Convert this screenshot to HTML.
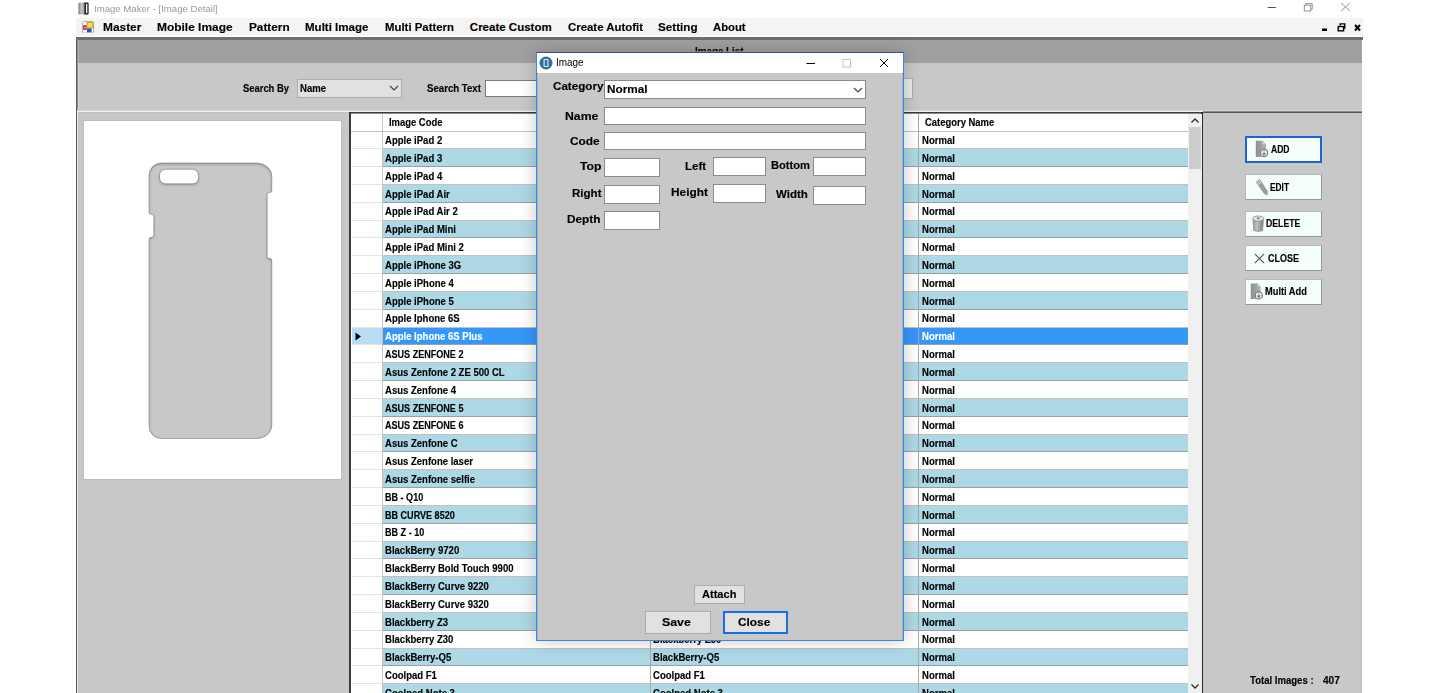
<!DOCTYPE html>
<html><head><meta charset="utf-8"><style>
*{margin:0;padding:0;box-sizing:border-box}
html,body{width:1441px;height:693px;overflow:hidden;background:#fff;position:relative;font-family:"Liberation Sans",sans-serif}
.a{position:absolute}
.tx{position:absolute;white-space:nowrap;line-height:1;transform-origin:0 0;-webkit-text-stroke:0.15px currentColor}
.row{position:absolute;left:383px;width:805px;height:17.81px}
.rl{position:absolute;left:383px;width:805px;height:1px;background:#b4b4b4}
.rh{position:absolute;left:352px;width:30px;height:1px;background:#e4e4e4}
.btn{position:absolute;left:1245px;width:77px;height:26px;background:#f5fffa;border:1px solid #b8b8b8;border-right-color:#989898;border-bottom-color:#989898}
.tb{position:absolute;background:#fff;border:1px solid #8c8c8c}
.dbtn{position:absolute;background:#e1e1e1;border:1px solid #adadad}
</style></head><body>

<svg class="a" style="left:77.5px;top:1.5px" width="11" height="13" viewBox="0 0 11 13">
<defs><linearGradient id="ig" x1="0" x2="1"><stop offset="0" stop-color="#7c7c7c"/><stop offset="0.5" stop-color="#c4c4c4"/><stop offset="1" stop-color="#9a9a9a"/></linearGradient></defs>
<rect x="0.4" y="0.6" width="6.2" height="11.8" rx="1.2" fill="url(#ig)"/>
<rect x="6.1" y="0.2" width="0.8" height="12.6" fill="#444"/>
<rect x="6.9" y="0.6" width="3.7" height="11.8" rx="0.9" fill="#111"/>
<rect x="7.9" y="1.8" width="1.5" height="9.4" fill="#e8f4f4"/>
</svg>
<div class="tx" style="left:93.74px;top:4.73px;font-size:8.87px;transform:scaleX(1.083);color:#9b97a0;-webkit-text-stroke:0">Image Maker - [Image Detail]</div>
<svg class="a" style="left:1260px;top:0px" width="100" height="16" viewBox="0 0 100 16">
<line x1="7.7" y1="7.5" x2="16" y2="7.5" stroke="#555" stroke-width="1"/>
<rect x="44.3" y="5.2" width="6.4" height="5.8" fill="none" stroke="#888" stroke-width="0.9"/>
<path d="M45.8 5.2 V3.6 H52.2 V9.2 H50.7" fill="none" stroke="#888" stroke-width="0.9"/>
<path d="M81 3 L90 11 M90 3 L81 11" stroke="#8a8a8a" stroke-width="0.9"/>
</svg>
<div class="a" style="left:76px;top:17.5px;width:1287px;height:18.5px;background:#f4f4f4"></div>
<svg class="a" style="left:82px;top:20.8px" width="12" height="12.5" viewBox="0 0 12 12.5">
<rect x="0.5" y="0.5" width="11" height="11.5" rx="1.2" fill="#fff" stroke="#a8a8a8" stroke-width="0.9"/>
<rect x="1.2" y="4.2" width="3.4" height="4.6" fill="#b81212"/>
<rect x="2.3" y="5.6" width="1.4" height="1.8" fill="#f4d0d0"/>
<rect x="5" y="1.3" width="6" height="5.6" fill="#f2dc58" stroke="#c49a00" stroke-width="0.8"/>
<rect x="5" y="7.4" width="4.6" height="3.9" fill="#1a56cc"/>
</svg>
<div class="tx" style="left:102.77px;top:21.57px;font-size:11.50px;font-weight:bold;transform:scaleX(1.034);color:#000">Master</div>
<div class="tx" style="left:157.36px;top:21.57px;font-size:11.50px;font-weight:bold;transform:scaleX(1.038);color:#000">Mobile Image</div>
<div class="tx" style="left:249.08px;top:21.57px;font-size:11.50px;font-weight:bold;transform:scaleX(1.025);color:#000">Pattern</div>
<div class="tx" style="left:304.89px;top:21.57px;font-size:11.50px;font-weight:bold;transform:scaleX(1.003);color:#000">Multi Image</div>
<div class="tx" style="left:384.70px;top:21.57px;font-size:11.50px;font-weight:bold;transform:scaleX(0.991);color:#000">Multi Pattern</div>
<div class="tx" style="left:469.84px;top:21.57px;font-size:11.50px;font-weight:bold;transform:scaleX(1.000);color:#000">Create Custom</div>
<div class="tx" style="left:567.74px;top:21.57px;font-size:11.50px;font-weight:bold;transform:scaleX(0.992);color:#000">Create Autofit</div>
<div class="tx" style="left:658.25px;top:21.57px;font-size:11.50px;font-weight:bold;transform:scaleX(1.015);color:#000">Setting</div>
<div class="tx" style="left:713.16px;top:21.57px;font-size:11.50px;font-weight:bold;transform:scaleX(0.982);color:#000">About</div>
<svg class="a" style="left:1318px;top:20px" width="46" height="14" viewBox="0 0 46 14">
<rect x="4" y="8.5" width="5" height="2.5" fill="#000"/>
<rect x="20.2" y="6.6" width="5.4" height="4.2" fill="none" stroke="#000" stroke-width="1.4"/>
<path d="M22.2 5.8 V3.9 H26.8 V8 H26" fill="none" stroke="#000" stroke-width="1.4"/>
<path d="M37 5 L42 10.5 M42 5 L37 10.5" stroke="#000" stroke-width="2"/>
</svg>
<div class="a" style="left:76px;top:37px;width:1286px;height:656px;background:#c8c8c8"></div>
<div class="a" style="left:76px;top:37px;width:1286.5px;height:2.5px;background:#6e6e6e"></div>
<div class="a" style="left:76px;top:37px;width:1px;height:656px;background:#5c5c5c"></div>
<div class="a" style="left:77px;top:39px;width:1px;height:71px;background:#8c8c8c"></div>
<div class="a" style="left:78px;top:39.5px;width:1px;height:23px;background:#b0b0b0"></div>
<div class="a" style="left:78px;top:62.5px;width:1px;height:47.5px;background:#d6d6d6"></div>
<div class="a" style="left:77px;top:112px;width:1px;height:581px;background:#e8e8e8"></div>
<div class="a" style="left:79px;top:39.5px;width:1283px;height:23px;background:#a0a0a0"></div>
<div class="a" style="left:77px;top:110px;width:1285px;height:1px;background:#d6d6d6"></div>
<div class="a" style="left:77px;top:111px;width:1285px;height:1px;background:#f2f2f2"></div>
<div class="a" style="left:78px;top:112px;width:1284px;height:1px;background:#c0c0c0"></div>
<div class="a" style="left:1203px;top:111px;width:159px;height:1px;background:#8c8c8c"></div>
<div class="a" style="left:1203px;top:112px;width:159px;height:1px;background:#555"></div>
<div class="a" style="left:1361px;top:113px;width:1px;height:580px;background:#bdbdbd"></div>
<div class="tx" style="left:695.21px;top:47.40px;font-size:10.30px;font-weight:bold;transform:scaleX(0.953);color:#000">Image List</div>
<div class="tx" style="left:242.52px;top:84.05px;font-size:10.30px;font-weight:bold;transform:scaleX(0.913);color:#000">Search By</div>
<div class="a" style="left:297px;top:79px;width:105px;height:19px;background:#e1e1e1;border:1px solid #adadad"></div>
<div class="tx" style="left:300.23px;top:84.05px;font-size:10.30px;font-weight:bold;transform:scaleX(0.930);color:#000">Name</div>
<svg class="a" style="left:389px;top:85px" width="10" height="6" viewBox="0 0 10 6"><path d="M1 1 L5 5 L9 1" fill="none" stroke="#444" stroke-width="1.2"/></svg>
<div class="tx" style="left:426.71px;top:83.85px;font-size:10.30px;font-weight:bold;transform:scaleX(0.936);color:#000">Search Text</div>
<div class="a" style="left:485px;top:80px;width:60px;height:17px;background:#fff;border:1px solid #7a7a7a"></div>
<div class="a" style="left:895px;top:77.5px;width:18px;height:21px;background:#e6eee9;border:1px solid #adadad"></div>
<div class="a" style="left:83px;top:120px;width:259px;height:360px;background:#bdbdbd"></div>
<div class="a" style="left:84px;top:121px;width:257px;height:358px;background:#fff"></div>
<svg class="a" style="left:140px;top:155px" width="145" height="295" viewBox="0 0 145 295">
<defs><filter id="inset" x="-5%" y="-5%" width="110%" height="110%">
<feComponentTransfer in="SourceAlpha" result="inv"><feFuncA type="table" tableValues="1 0"/></feComponentTransfer>
<feGaussianBlur in="inv" stdDeviation="1.4"/>
<feOffset dx="0.4" dy="1.2" result="ob"/>
<feFlood flood-color="#000" flood-opacity="0.62"/>
<feComposite in2="ob" operator="in"/>
<feComposite in2="SourceAlpha" operator="in" result="is"/>
<feMerge><feMergeNode in="SourceGraphic"/><feMergeNode in="is"/></feMerge>
</filter></defs>
<path filter="url(#inset)" fill-rule="evenodd" fill="#c8c8c8" stroke="#8a8a8a" stroke-width="0.6" d="M9.2 20.2 A12 12 0 0 1 21.2 8.2 H116.7 A15 13 0 0 1 131.7 21.2 V35.5 Q131.7 37.5 129.7 37.5 H129.1 Q127.1 37.5 127.1 39.5 V101.6 Q127.1 103.6 129.1 103.6 H129.7 Q131.7 103.6 131.7 105.6 V270.5 A15 13 0 0 1 116.7 283.5 H21.2 A12 12 0 0 1 9.2 271.5 V84.4 Q9.2 82.4 11.2 82.4 H11.7 Q13.9 82.4 13.9 80.2 V61.4 Q13.9 59.2 11.7 59.2 H11.2 Q9.2 59.2 9.2 57.2 Z M25.5 14.2 H52.6 A6 6 0 0 1 58.6 20.2 V22.9 A6 6 0 0 1 52.6 28.9 H25.5 A6 6 0 0 1 19.5 22.9 V20.2 A6 6 0 0 1 25.5 14.2 Z"/>
</svg>
<div class="a" style="left:349px;top:112px;width:854px;height:581px;background:#fff;border-left:2px solid #3c3c3c;border-top:1px solid #3a3a3a;border-right:2px solid #2a2a2a"></div>
<div class="a" style="left:351px;top:113px;width:850px;height:1px;background:#8e8e8e"></div>
<div class="a" style="left:351px;top:131px;width:837px;height:1px;background:#c0c0c0"></div>
<div class="tx" style="left:388.84px;top:118.25px;font-size:10.30px;font-weight:bold;transform:scaleX(0.915);color:#000">Image Code</div>
<div class="tx" style="left:925.32px;top:118.00px;font-size:10.30px;font-weight:bold;transform:scaleX(0.917);color:#000">Category Name</div>
<div class="a" style="left:383px;width:805px;top:132px;height:16px;background:#ffffff"></div>
<div class="rl" style="top:148px;background:#c8bebe"></div>
<div class="rh" style="top:148px"></div>
<div class="tx" style="left:385.01px;top:136.15px;font-size:10.00px;font-weight:bold;transform:scaleX(0.953);color:#000">Apple iPad 2</div>
<div class="tx" style="left:653.21px;top:136.15px;font-size:10.00px;font-weight:bold;transform:scaleX(0.953);color:#000">Apple iPad 2</div>
<div class="tx" style="left:921.93px;top:136.15px;font-size:10.00px;font-weight:bold;transform:scaleX(0.953);color:#000">Normal</div>
<div class="a" style="left:383px;width:805px;top:149px;height:17px;background:#add8e6"></div>
<div class="rl" style="top:166px;background:#9aa0a2"></div>
<div class="rh" style="top:166px"></div>
<div class="tx" style="left:385.01px;top:153.98px;font-size:10.00px;font-weight:bold;transform:scaleX(0.953);color:#000">Apple iPad 3</div>
<div class="tx" style="left:653.21px;top:153.98px;font-size:10.00px;font-weight:bold;transform:scaleX(0.953);color:#000">Apple iPad 3</div>
<div class="tx" style="left:921.93px;top:153.98px;font-size:10.00px;font-weight:bold;transform:scaleX(0.953);color:#000">Normal</div>
<div class="a" style="left:383px;width:805px;top:167px;height:17px;background:#ffffff"></div>
<div class="rl" style="top:184px;background:#c8bebe"></div>
<div class="rh" style="top:184px"></div>
<div class="tx" style="left:385.01px;top:171.81px;font-size:10.00px;font-weight:bold;transform:scaleX(0.953);color:#000">Apple iPad 4</div>
<div class="tx" style="left:653.21px;top:171.81px;font-size:10.00px;font-weight:bold;transform:scaleX(0.953);color:#000">Apple iPad 4</div>
<div class="tx" style="left:921.93px;top:171.81px;font-size:10.00px;font-weight:bold;transform:scaleX(0.953);color:#000">Normal</div>
<div class="a" style="left:383px;width:805px;top:185px;height:17px;background:#add8e6"></div>
<div class="rl" style="top:202px;background:#9aa0a2"></div>
<div class="rh" style="top:202px"></div>
<div class="tx" style="left:385.01px;top:189.64px;font-size:10.00px;font-weight:bold;transform:scaleX(0.953);color:#000">Apple iPad Air</div>
<div class="tx" style="left:653.21px;top:189.64px;font-size:10.00px;font-weight:bold;transform:scaleX(0.953);color:#000">Apple iPad Air</div>
<div class="tx" style="left:921.93px;top:189.64px;font-size:10.00px;font-weight:bold;transform:scaleX(0.953);color:#000">Normal</div>
<div class="a" style="left:383px;width:805px;top:203px;height:17px;background:#ffffff"></div>
<div class="rl" style="top:220px;background:#c8bebe"></div>
<div class="rh" style="top:220px"></div>
<div class="tx" style="left:385.01px;top:207.47px;font-size:10.00px;font-weight:bold;transform:scaleX(0.953);color:#000">Apple iPad Air 2</div>
<div class="tx" style="left:653.21px;top:207.47px;font-size:10.00px;font-weight:bold;transform:scaleX(0.953);color:#000">Apple iPad Air 2</div>
<div class="tx" style="left:921.93px;top:207.47px;font-size:10.00px;font-weight:bold;transform:scaleX(0.953);color:#000">Normal</div>
<div class="a" style="left:383px;width:805px;top:221px;height:16px;background:#add8e6"></div>
<div class="rl" style="top:237px;background:#9aa0a2"></div>
<div class="rh" style="top:237px"></div>
<div class="tx" style="left:385.01px;top:225.30px;font-size:10.00px;font-weight:bold;transform:scaleX(0.953);color:#000">Apple iPad Mini</div>
<div class="tx" style="left:653.21px;top:225.30px;font-size:10.00px;font-weight:bold;transform:scaleX(0.953);color:#000">Apple iPad Mini</div>
<div class="tx" style="left:921.93px;top:225.30px;font-size:10.00px;font-weight:bold;transform:scaleX(0.953);color:#000">Normal</div>
<div class="a" style="left:383px;width:805px;top:238px;height:17px;background:#ffffff"></div>
<div class="rl" style="top:255px;background:#c8bebe"></div>
<div class="rh" style="top:255px"></div>
<div class="tx" style="left:385.01px;top:243.13px;font-size:10.00px;font-weight:bold;transform:scaleX(0.953);color:#000">Apple iPad Mini 2</div>
<div class="tx" style="left:653.21px;top:243.13px;font-size:10.00px;font-weight:bold;transform:scaleX(0.953);color:#000">Apple iPad Mini 2</div>
<div class="tx" style="left:921.93px;top:243.13px;font-size:10.00px;font-weight:bold;transform:scaleX(0.953);color:#000">Normal</div>
<div class="a" style="left:383px;width:805px;top:256px;height:17px;background:#add8e6"></div>
<div class="rl" style="top:273px;background:#9aa0a2"></div>
<div class="rh" style="top:273px"></div>
<div class="tx" style="left:385.01px;top:260.96px;font-size:10.00px;font-weight:bold;transform:scaleX(0.953);color:#000">Apple iPhone 3G</div>
<div class="tx" style="left:653.21px;top:260.96px;font-size:10.00px;font-weight:bold;transform:scaleX(0.953);color:#000">Apple iPhone 3G</div>
<div class="tx" style="left:921.93px;top:260.96px;font-size:10.00px;font-weight:bold;transform:scaleX(0.953);color:#000">Normal</div>
<div class="a" style="left:383px;width:805px;top:274px;height:17px;background:#ffffff"></div>
<div class="rl" style="top:291px;background:#c8bebe"></div>
<div class="rh" style="top:291px"></div>
<div class="tx" style="left:385.01px;top:278.79px;font-size:10.00px;font-weight:bold;transform:scaleX(0.953);color:#000">Apple iPhone 4</div>
<div class="tx" style="left:653.21px;top:278.79px;font-size:10.00px;font-weight:bold;transform:scaleX(0.953);color:#000">Apple iPhone 4</div>
<div class="tx" style="left:921.93px;top:278.79px;font-size:10.00px;font-weight:bold;transform:scaleX(0.953);color:#000">Normal</div>
<div class="a" style="left:383px;width:805px;top:292px;height:17px;background:#add8e6"></div>
<div class="rl" style="top:309px;background:#9aa0a2"></div>
<div class="rh" style="top:309px"></div>
<div class="tx" style="left:385.01px;top:296.62px;font-size:10.00px;font-weight:bold;transform:scaleX(0.953);color:#000">Apple iPhone 5</div>
<div class="tx" style="left:653.21px;top:296.62px;font-size:10.00px;font-weight:bold;transform:scaleX(0.953);color:#000">Apple iPhone 5</div>
<div class="tx" style="left:921.93px;top:296.62px;font-size:10.00px;font-weight:bold;transform:scaleX(0.953);color:#000">Normal</div>
<div class="a" style="left:383px;width:805px;top:310px;height:17px;background:#ffffff"></div>
<div class="rl" style="top:327px;background:#c8bebe"></div>
<div class="rh" style="top:327px"></div>
<div class="tx" style="left:385.01px;top:314.45px;font-size:10.00px;font-weight:bold;transform:scaleX(0.953);color:#000">Apple Iphone 6S</div>
<div class="tx" style="left:653.21px;top:314.45px;font-size:10.00px;font-weight:bold;transform:scaleX(0.953);color:#000">Apple Iphone 6S</div>
<div class="tx" style="left:921.93px;top:314.45px;font-size:10.00px;font-weight:bold;transform:scaleX(0.953);color:#000">Normal</div>
<div class="a" style="left:383px;width:805px;top:328px;height:16px;background:#3597f8"></div>
<div class="rl" style="top:344px;background:#9aa0a2"></div>
<div class="rh" style="top:344px"></div>
<div class="tx" style="left:385.01px;top:332.28px;font-size:10.00px;font-weight:bold;transform:scaleX(0.953);color:#fff">Apple Iphone 6S Plus</div>
<div class="tx" style="left:653.21px;top:332.28px;font-size:10.00px;font-weight:bold;transform:scaleX(0.953);color:#fff">Apple Iphone 6S Plus</div>
<div class="tx" style="left:921.93px;top:332.28px;font-size:10.00px;font-weight:bold;transform:scaleX(0.953);color:#fff">Normal</div>
<div class="a" style="left:352px;top:328px;width:30px;height:16px;background:#bcdcf6"></div>
<svg class="a" style="left:355px;top:332.00px" width="7" height="9" viewBox="0 0 7 9"><path d="M0.5 0.5 L6 4.5 L0.5 8.5 Z" fill="#000"/></svg>
<div class="a" style="left:383px;width:805px;top:345px;height:17px;background:#ffffff"></div>
<div class="rl" style="top:362px;background:#c8bebe"></div>
<div class="rh" style="top:362px"></div>
<div class="tx" style="left:385.03px;top:350.11px;font-size:10.00px;font-weight:bold;transform:scaleX(0.905);color:#000">ASUS ZENFONE 2</div>
<div class="tx" style="left:653.23px;top:350.11px;font-size:10.00px;font-weight:bold;transform:scaleX(0.905);color:#000">ASUS ZENFONE 2</div>
<div class="tx" style="left:921.93px;top:350.11px;font-size:10.00px;font-weight:bold;transform:scaleX(0.953);color:#000">Normal</div>
<div class="a" style="left:383px;width:805px;top:363px;height:17px;background:#add8e6"></div>
<div class="rl" style="top:380px;background:#9aa0a2"></div>
<div class="rh" style="top:380px"></div>
<div class="tx" style="left:385.01px;top:367.94px;font-size:10.00px;font-weight:bold;transform:scaleX(0.953);color:#000">Asus Zenfone 2 ZE 500 CL</div>
<div class="tx" style="left:653.21px;top:367.94px;font-size:10.00px;font-weight:bold;transform:scaleX(0.953);color:#000">Asus Zenfone 2 ZE 500 CL</div>
<div class="tx" style="left:921.93px;top:367.94px;font-size:10.00px;font-weight:bold;transform:scaleX(0.953);color:#000">Normal</div>
<div class="a" style="left:383px;width:805px;top:381px;height:17px;background:#ffffff"></div>
<div class="rl" style="top:398px;background:#c8bebe"></div>
<div class="rh" style="top:398px"></div>
<div class="tx" style="left:385.01px;top:385.77px;font-size:10.00px;font-weight:bold;transform:scaleX(0.953);color:#000">Asus Zenfone 4</div>
<div class="tx" style="left:653.21px;top:385.77px;font-size:10.00px;font-weight:bold;transform:scaleX(0.953);color:#000">Asus Zenfone 4</div>
<div class="tx" style="left:921.93px;top:385.77px;font-size:10.00px;font-weight:bold;transform:scaleX(0.953);color:#000">Normal</div>
<div class="a" style="left:383px;width:805px;top:399px;height:17px;background:#add8e6"></div>
<div class="rl" style="top:416px;background:#9aa0a2"></div>
<div class="rh" style="top:416px"></div>
<div class="tx" style="left:385.03px;top:403.60px;font-size:10.00px;font-weight:bold;transform:scaleX(0.905);color:#000">ASUS ZENFONE 5</div>
<div class="tx" style="left:653.23px;top:403.60px;font-size:10.00px;font-weight:bold;transform:scaleX(0.905);color:#000">ASUS ZENFONE 5</div>
<div class="tx" style="left:921.93px;top:403.60px;font-size:10.00px;font-weight:bold;transform:scaleX(0.953);color:#000">Normal</div>
<div class="a" style="left:383px;width:805px;top:417px;height:17px;background:#ffffff"></div>
<div class="rl" style="top:434px;background:#c8bebe"></div>
<div class="rh" style="top:434px"></div>
<div class="tx" style="left:385.03px;top:421.43px;font-size:10.00px;font-weight:bold;transform:scaleX(0.905);color:#000">ASUS ZENFONE 6</div>
<div class="tx" style="left:653.23px;top:421.43px;font-size:10.00px;font-weight:bold;transform:scaleX(0.905);color:#000">ASUS ZENFONE 6</div>
<div class="tx" style="left:921.93px;top:421.43px;font-size:10.00px;font-weight:bold;transform:scaleX(0.953);color:#000">Normal</div>
<div class="a" style="left:383px;width:805px;top:435px;height:16px;background:#add8e6"></div>
<div class="rl" style="top:451px;background:#9aa0a2"></div>
<div class="rh" style="top:451px"></div>
<div class="tx" style="left:385.01px;top:439.26px;font-size:10.00px;font-weight:bold;transform:scaleX(0.953);color:#000">Asus Zenfone C</div>
<div class="tx" style="left:653.21px;top:439.26px;font-size:10.00px;font-weight:bold;transform:scaleX(0.953);color:#000">Asus Zenfone C</div>
<div class="tx" style="left:921.93px;top:439.26px;font-size:10.00px;font-weight:bold;transform:scaleX(0.953);color:#000">Normal</div>
<div class="a" style="left:383px;width:805px;top:452px;height:17px;background:#ffffff"></div>
<div class="rl" style="top:469px;background:#c8bebe"></div>
<div class="rh" style="top:469px"></div>
<div class="tx" style="left:385.01px;top:457.09px;font-size:10.00px;font-weight:bold;transform:scaleX(0.953);color:#000">Asus Zenfone laser</div>
<div class="tx" style="left:653.21px;top:457.09px;font-size:10.00px;font-weight:bold;transform:scaleX(0.953);color:#000">Asus Zenfone laser</div>
<div class="tx" style="left:921.93px;top:457.09px;font-size:10.00px;font-weight:bold;transform:scaleX(0.953);color:#000">Normal</div>
<div class="a" style="left:383px;width:805px;top:470px;height:17px;background:#add8e6"></div>
<div class="rl" style="top:487px;background:#9aa0a2"></div>
<div class="rh" style="top:487px"></div>
<div class="tx" style="left:385.01px;top:474.92px;font-size:10.00px;font-weight:bold;transform:scaleX(0.953);color:#000">Asus Zenfone selfie</div>
<div class="tx" style="left:653.21px;top:474.92px;font-size:10.00px;font-weight:bold;transform:scaleX(0.953);color:#000">Asus Zenfone selfie</div>
<div class="tx" style="left:921.93px;top:474.92px;font-size:10.00px;font-weight:bold;transform:scaleX(0.953);color:#000">Normal</div>
<div class="a" style="left:383px;width:805px;top:488px;height:17px;background:#ffffff"></div>
<div class="rl" style="top:505px;background:#c8bebe"></div>
<div class="rh" style="top:505px"></div>
<div class="tx" style="left:384.67px;top:492.75px;font-size:10.00px;font-weight:bold;transform:scaleX(0.905);color:#000">BB - Q10</div>
<div class="tx" style="left:652.87px;top:492.75px;font-size:10.00px;font-weight:bold;transform:scaleX(0.905);color:#000">BB - Q10</div>
<div class="tx" style="left:921.93px;top:492.75px;font-size:10.00px;font-weight:bold;transform:scaleX(0.953);color:#000">Normal</div>
<div class="a" style="left:383px;width:805px;top:506px;height:17px;background:#add8e6"></div>
<div class="rl" style="top:523px;background:#9aa0a2"></div>
<div class="rh" style="top:523px"></div>
<div class="tx" style="left:384.67px;top:510.58px;font-size:10.00px;font-weight:bold;transform:scaleX(0.905);color:#000">BB CURVE 8520</div>
<div class="tx" style="left:652.87px;top:510.58px;font-size:10.00px;font-weight:bold;transform:scaleX(0.905);color:#000">BB CURVE 8520</div>
<div class="tx" style="left:921.93px;top:510.58px;font-size:10.00px;font-weight:bold;transform:scaleX(0.953);color:#000">Normal</div>
<div class="a" style="left:383px;width:805px;top:524px;height:17px;background:#ffffff"></div>
<div class="rl" style="top:541px;background:#c8bebe"></div>
<div class="rh" style="top:541px"></div>
<div class="tx" style="left:384.67px;top:528.41px;font-size:10.00px;font-weight:bold;transform:scaleX(0.905);color:#000">BB Z - 10</div>
<div class="tx" style="left:652.87px;top:528.41px;font-size:10.00px;font-weight:bold;transform:scaleX(0.905);color:#000">BB Z - 10</div>
<div class="tx" style="left:921.93px;top:528.41px;font-size:10.00px;font-weight:bold;transform:scaleX(0.953);color:#000">Normal</div>
<div class="a" style="left:383px;width:805px;top:542px;height:16px;background:#add8e6"></div>
<div class="rl" style="top:558px;background:#9aa0a2"></div>
<div class="rh" style="top:558px"></div>
<div class="tx" style="left:384.63px;top:546.24px;font-size:10.00px;font-weight:bold;transform:scaleX(0.953);color:#000">BlackBerry 9720</div>
<div class="tx" style="left:652.83px;top:546.24px;font-size:10.00px;font-weight:bold;transform:scaleX(0.953);color:#000">BlackBerry 9720</div>
<div class="tx" style="left:921.93px;top:546.24px;font-size:10.00px;font-weight:bold;transform:scaleX(0.953);color:#000">Normal</div>
<div class="a" style="left:383px;width:805px;top:559px;height:17px;background:#ffffff"></div>
<div class="rl" style="top:576px;background:#c8bebe"></div>
<div class="rh" style="top:576px"></div>
<div class="tx" style="left:384.63px;top:564.07px;font-size:10.00px;font-weight:bold;transform:scaleX(0.953);color:#000">BlackBerry Bold Touch 9900</div>
<div class="tx" style="left:652.83px;top:564.07px;font-size:10.00px;font-weight:bold;transform:scaleX(0.953);color:#000">BlackBerry Bold Touch 9900</div>
<div class="tx" style="left:921.93px;top:564.07px;font-size:10.00px;font-weight:bold;transform:scaleX(0.953);color:#000">Normal</div>
<div class="a" style="left:383px;width:805px;top:577px;height:17px;background:#add8e6"></div>
<div class="rl" style="top:594px;background:#9aa0a2"></div>
<div class="rh" style="top:594px"></div>
<div class="tx" style="left:384.63px;top:581.90px;font-size:10.00px;font-weight:bold;transform:scaleX(0.953);color:#000">BlackBerry Curve 9220</div>
<div class="tx" style="left:652.83px;top:581.90px;font-size:10.00px;font-weight:bold;transform:scaleX(0.953);color:#000">BlackBerry Curve 9220</div>
<div class="tx" style="left:921.93px;top:581.90px;font-size:10.00px;font-weight:bold;transform:scaleX(0.953);color:#000">Normal</div>
<div class="a" style="left:383px;width:805px;top:595px;height:17px;background:#ffffff"></div>
<div class="rl" style="top:612px;background:#c8bebe"></div>
<div class="rh" style="top:612px"></div>
<div class="tx" style="left:384.63px;top:599.73px;font-size:10.00px;font-weight:bold;transform:scaleX(0.953);color:#000">BlackBerry Curve 9320</div>
<div class="tx" style="left:652.83px;top:599.73px;font-size:10.00px;font-weight:bold;transform:scaleX(0.953);color:#000">BlackBerry Curve 9320</div>
<div class="tx" style="left:921.93px;top:599.73px;font-size:10.00px;font-weight:bold;transform:scaleX(0.953);color:#000">Normal</div>
<div class="a" style="left:383px;width:805px;top:613px;height:17px;background:#add8e6"></div>
<div class="rl" style="top:630px;background:#9aa0a2"></div>
<div class="rh" style="top:630px"></div>
<div class="tx" style="left:384.63px;top:617.56px;font-size:10.00px;font-weight:bold;transform:scaleX(0.953);color:#000">Blackberry Z3</div>
<div class="tx" style="left:652.83px;top:617.56px;font-size:10.00px;font-weight:bold;transform:scaleX(0.953);color:#000">Blackberry Z3</div>
<div class="tx" style="left:921.93px;top:617.56px;font-size:10.00px;font-weight:bold;transform:scaleX(0.953);color:#000">Normal</div>
<div class="a" style="left:383px;width:805px;top:631px;height:17px;background:#ffffff"></div>
<div class="rl" style="top:648px;background:#c8bebe"></div>
<div class="rh" style="top:648px"></div>
<div class="tx" style="left:384.63px;top:635.39px;font-size:10.00px;font-weight:bold;transform:scaleX(0.953);color:#000">Blackberry Z30</div>
<div class="tx" style="left:652.83px;top:635.39px;font-size:10.00px;font-weight:bold;transform:scaleX(0.953);color:#000">Blackberry Z30</div>
<div class="tx" style="left:921.93px;top:635.39px;font-size:10.00px;font-weight:bold;transform:scaleX(0.953);color:#000">Normal</div>
<div class="a" style="left:383px;width:805px;top:649px;height:16px;background:#add8e6"></div>
<div class="rl" style="top:665px;background:#9aa0a2"></div>
<div class="rh" style="top:665px"></div>
<div class="tx" style="left:384.63px;top:653.22px;font-size:10.00px;font-weight:bold;transform:scaleX(0.953);color:#000">BlackBerry-Q5</div>
<div class="tx" style="left:652.83px;top:653.22px;font-size:10.00px;font-weight:bold;transform:scaleX(0.953);color:#000">BlackBerry-Q5</div>
<div class="tx" style="left:921.93px;top:653.22px;font-size:10.00px;font-weight:bold;transform:scaleX(0.953);color:#000">Normal</div>
<div class="a" style="left:383px;width:805px;top:666px;height:17px;background:#ffffff"></div>
<div class="rl" style="top:683px;background:#c8bebe"></div>
<div class="rh" style="top:683px"></div>
<div class="tx" style="left:384.92px;top:671.05px;font-size:10.00px;font-weight:bold;transform:scaleX(0.953);color:#000">Coolpad F1</div>
<div class="tx" style="left:653.12px;top:671.05px;font-size:10.00px;font-weight:bold;transform:scaleX(0.953);color:#000">Coolpad F1</div>
<div class="tx" style="left:921.93px;top:671.05px;font-size:10.00px;font-weight:bold;transform:scaleX(0.953);color:#000">Normal</div>
<div class="a" style="left:383px;width:805px;top:684px;height:17px;background:#add8e6"></div>
<div class="rl" style="top:701px;background:#9aa0a2"></div>
<div class="rh" style="top:701px"></div>
<div class="tx" style="left:384.92px;top:688.88px;font-size:10.00px;font-weight:bold;transform:scaleX(0.953);color:#000">Coolpad Note 3</div>
<div class="tx" style="left:653.12px;top:688.88px;font-size:10.00px;font-weight:bold;transform:scaleX(0.953);color:#000">Coolpad Note 3</div>
<div class="tx" style="left:921.93px;top:688.88px;font-size:10.00px;font-weight:bold;transform:scaleX(0.953);color:#000">Normal</div>
<div class="a" style="left:650px;top:114px;width:1px;height:579px;background:#a8a8a8"></div>
<div class="a" style="left:918px;top:114px;width:1px;height:579px;background:#a8a8a8"></div>
<div class="a" style="left:382px;top:114px;width:1px;height:579px;background:#c4c4c4"></div>
<div class="a" style="left:1188px;top:114px;width:14px;height:579px;background:#f0f0f0"></div>
<div class="a" style="left:1189px;top:127px;width:12px;height:42px;background:#cdcdcd"></div>
<svg class="a" style="left:1190px;top:117px" width="10" height="7" viewBox="0 0 10 7"><path d="M1.5 5.5 L5 2 L8.5 5.5" fill="none" stroke="#333" stroke-width="1.4"/></svg>
<svg class="a" style="left:1190px;top:683px" width="10" height="7" viewBox="0 0 10 7"><path d="M1.5 1.5 L5 5 L8.5 1.5" fill="none" stroke="#333" stroke-width="1.4"/></svg>
<div class="btn" style="top:135.5px;height:27px;border:2px solid #1f62da"></div>
<div class="btn" style="top:174px"></div>
<div class="btn" style="top:211px"></div>
<div class="btn" style="top:245px"></div>
<div class="btn" style="top:279px"></div>
<div class="tx" style="left:1270.64px;top:145.05px;font-size:10.30px;font-weight:bold;transform:scaleX(0.827);color:#000">ADD</div>
<div class="tx" style="left:1269.71px;top:182.95px;font-size:10.30px;font-weight:bold;transform:scaleX(0.812);color:#000">EDIT</div>
<div class="tx" style="left:1266.49px;top:219.20px;font-size:10.30px;font-weight:bold;transform:scaleX(0.847);color:#000">DELETE</div>
<div class="tx" style="left:1267.94px;top:254.30px;font-size:10.30px;font-weight:bold;transform:scaleX(0.873);color:#000">CLOSE</div>
<div class="tx" style="left:1264.65px;top:287.25px;font-size:10.30px;font-weight:bold;transform:scaleX(0.900);color:#000">Multi Add</div>
<div class="tx" style="left:1249.60px;top:676.10px;font-size:10.30px;font-weight:bold;transform:scaleX(0.929);color:#000">Total Images :</div>
<div class="tx" style="left:1323.10px;top:676.10px;font-size:10.30px;font-weight:bold;transform:scaleX(0.977);color:#000">407</div>
<svg class="a" style="left:1255px;top:139.5px" width="13" height="18" viewBox="0 0 13 18">
<defs><linearGradient id="dg" x1="0" x2="1"><stop offset="0" stop-color="#8e8e8e"/><stop offset="1" stop-color="#b4b4b4"/></linearGradient></defs>
<path d="M0.8 0.8 H7 L11 4.8 V10 H6.5 V17 H0.8 Z" fill="url(#dg)"/>
<path d="M7 0.8 V4.8 H11 Z" fill="#d8d8d8" stroke="#9a9a9a" stroke-width="0.6"/>
<circle cx="9" cy="13" r="3.6" fill="#fff" stroke="#7c7c7c" stroke-width="1.3"/>
<path d="M9 10.8 V15.2 M7 13 L9 15.2 L11 13" fill="none" stroke="#7c7c7c" stroke-width="1.1"/>
</svg>
<svg class="a" style="left:1254.5px;top:178px" width="14" height="18" viewBox="0 0 14 18">
<path d="M1.2 4.2 L4.6 1.2 L12.6 13.6 L12.3 17 L9.2 15.6 Z" fill="#9c9c9c" stroke="#8a8a8a" stroke-width="0.5"/>
<path d="M2.2 5.2 L5.3 2.5 M3.2 6.6 L6.2 4" stroke="#eee" stroke-width="0.9"/>
</svg>
<svg class="a" style="left:1251.5px;top:214.5px" width="13" height="18" viewBox="0 0 13 18">
<defs><linearGradient id="tg" x1="0" x2="1"><stop offset="0" stop-color="#8a8a8a"/><stop offset="0.35" stop-color="#d8d8d8"/><stop offset="1" stop-color="#7a7a7a"/></linearGradient></defs>
<path d="M1 4 L1.8 15.5 Q6.2 17.6 10.6 15.5 L11.4 4 Z" fill="url(#tg)" stroke="#7a7a7a" stroke-width="0.6"/>
<path d="M4 6 V15.6 M6.2 6.4 V16.2 M8.4 6 V15.6" stroke="#8c8c8c" stroke-width="0.6"/>
<ellipse cx="6.2" cy="3.6" rx="5.6" ry="2.6" fill="#e4e4e4" stroke="#7a7a7a" stroke-width="0.7"/>
<ellipse cx="6.2" cy="3.2" rx="1.3" ry="0.7" fill="#555"/>
</svg>
<svg class="a" style="left:1253.5px;top:253px" width="11" height="11" viewBox="0 0 11 11"><path d="M0.8 0.8 L10.2 10.2 M10.2 0.8 L0.8 10.2" stroke="#555" stroke-width="1.05"/></svg>
<svg class="a" style="left:1250px;top:283px" width="13" height="17" viewBox="0 0 13 17">
<path d="M0.8 0.5 H7 L10.5 4 V9.5 H6 V16 H0.8 Z" fill="url(#dg)"/>
<path d="M7 0.5 V4 H10.5 Z" fill="#d8d8d8" stroke="#9a9a9a" stroke-width="0.6"/>
<circle cx="8.8" cy="12.4" r="3.5" fill="#fff" stroke="#7c7c7c" stroke-width="1.3"/>
<path d="M8.8 10.3 V14.5 M6.9 12.4 L8.8 14.5 L10.7 12.4" fill="none" stroke="#7c7c7c" stroke-width="1.1"/>
</svg>
<div class="a" style="left:536px;top:52px;width:368px;height:589px;background:#c8c8c8;border:1px solid #3f87d2;border-top-color:#1c54b4;box-shadow:0 0 16px rgba(0,0,0,0.22)"></div>
<div class="a" style="left:536px;top:51px;width:368px;height:1px;background:rgba(176,140,110,0.75)"></div>
<div class="a" style="left:537px;top:73px;width:1px;height:567px;background:#8fb6e0"></div>
<div class="a" style="left:538px;top:73px;width:1px;height:567px;background:#d8cbc0"></div>
<div class="a" style="left:902px;top:73px;width:1px;height:567px;background:#8fb6e0"></div>
<div class="a" style="left:901px;top:73px;width:1px;height:567px;background:#d8cbc0"></div>
<div class="a" style="left:537px;top:53px;width:366px;height:20px;background:#fff"></div>
<svg class="a" style="left:539px;top:56px" width="14" height="14" viewBox="0 0 14 14"><circle cx="7" cy="7" r="6.5" fill="#2f6f9a"/><rect x="4.5" y="3" width="5" height="8" rx="0.8" fill="#dfe9f0"/><rect x="5.7" y="4" width="2.6" height="6" fill="#2f6f9a"/></svg>
<div class="tx" style="left:555.61px;top:58.25px;font-size:10.40px;transform:scaleX(0.954);color:#000;-webkit-text-stroke:0">Image</div>
<svg class="a" style="left:800px;top:54px" width="100" height="18" viewBox="0 0 100 18">
<line x1="6.5" y1="9.5" x2="15" y2="9.5" stroke="#000" stroke-width="1"/>
<rect x="43" y="5.5" width="7.5" height="7.5" fill="none" stroke="#c4c4c4" stroke-width="1"/>
<path d="M80 5 L88 13 M88 5 L80 13" stroke="#000" stroke-width="1"/>
</svg>
<div class="tb" style="left:604px;top:80px;width:262px;height:19px;border-color:#8a8a8a"></div>
<svg class="a" style="left:853px;top:87px" width="10" height="6" viewBox="0 0 10 6"><path d="M1 1 L5 5 L9 1" fill="none" stroke="#444" stroke-width="1.2"/></svg>
<div class="tb" style="left:604px;top:107px;width:262px;height:18px"></div>
<div class="tb" style="left:604px;top:132px;width:262px;height:18px"></div>
<div class="tb" style="left:604px;top:158px;width:56px;height:19px"></div>
<div class="tb" style="left:713px;top:157px;width:53px;height:19px"></div>
<div class="tb" style="left:813px;top:157px;width:53px;height:19px"></div>
<div class="tb" style="left:604px;top:185px;width:56px;height:19px"></div>
<div class="tb" style="left:713px;top:184px;width:53px;height:19px"></div>
<div class="tb" style="left:813px;top:186px;width:53px;height:19px"></div>
<div class="tb" style="left:604px;top:211px;width:56px;height:19px"></div>
<div class="dbtn" style="left:694px;top:585px;width:51px;height:19px"></div>
<div class="dbtn" style="left:645px;top:611px;width:66px;height:23px"></div>
<div class="dbtn" style="left:723px;top:611px;width:65px;height:23px;border:2px solid #1a6fe0"></div>
<div class="tx" style="left:552.73px;top:80.70px;font-size:11.10px;font-weight:bold;transform:scaleX(1.048);color:#000">Category</div>
<div class="tx" style="left:570.32px;top:136.00px;font-size:11.10px;font-weight:bold;transform:scaleX(1.071);color:#000">Code</div>
<div class="tx" style="left:579.58px;top:161.15px;font-size:11.10px;font-weight:bold;transform:scaleX(1.106);color:#000">Top</div>
<div class="tx" style="left:684.70px;top:160.50px;font-size:11.10px;font-weight:bold;transform:scaleX(1.035);color:#000">Left</div>
<div class="tx" style="left:771.12px;top:160.35px;font-size:11.10px;font-weight:bold;transform:scaleX(1.005);color:#000">Bottom</div>
<div class="tx" style="left:571.99px;top:188.00px;font-size:11.10px;font-weight:bold;transform:scaleX(1.040);color:#000">Right</div>
<div class="tx" style="left:670.87px;top:187.10px;font-size:11.10px;font-weight:bold;transform:scaleX(1.067);color:#000">Height</div>
<div class="tx" style="left:776.30px;top:189.30px;font-size:11.10px;font-weight:bold;transform:scaleX(1.037);color:#000">Width</div>
<div class="tx" style="left:567.27px;top:213.80px;font-size:11.10px;font-weight:bold;transform:scaleX(1.064);color:#000">Depth</div>
<div class="tx" style="left:565.04px;top:110.65px;font-size:11.10px;font-weight:bold;transform:scaleX(1.104);color:#000">Name</div>
<div class="tx" style="left:606.88px;top:83.49px;font-size:11.70px;font-weight:bold;transform:scaleX(1.005);color:#000">Normal</div>
<div class="tx" style="left:701.97px;top:589.20px;font-size:10.80px;font-weight:bold;transform:scaleX(1.024);color:#000">Attach</div>
<div class="tx" style="left:662.33px;top:616.75px;font-size:10.80px;font-weight:bold;transform:scaleX(1.142);color:#000">Save</div>
<div class="tx" style="left:738.13px;top:616.75px;font-size:10.80px;font-weight:bold;transform:scaleX(1.097);color:#000">Close</div>
</body></html>
